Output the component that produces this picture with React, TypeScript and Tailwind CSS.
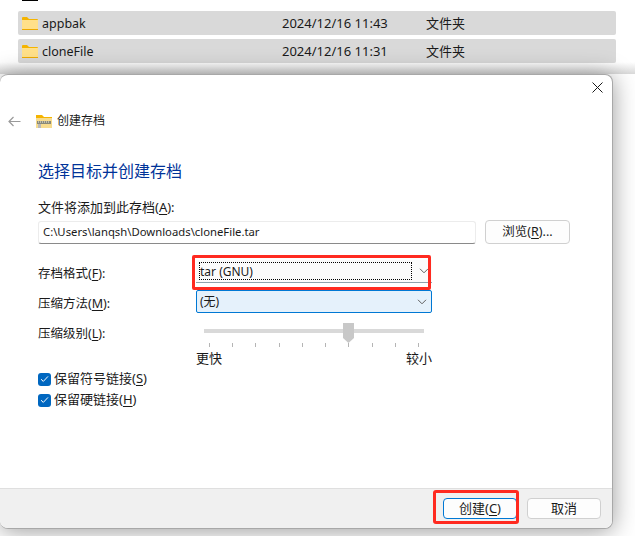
const FONT = "font-['Noto_Sans','Noto_Sans_CJK_SC',sans-serif]";

const FILES = [
  { name: "appbak", time: "2024/12/16 11:43", type: "文件夹" },
  { name: "cloneFile", time: "2024/12/16 11:31", type: "文件夹" },
];

const TICKS = [0, 1, 2, 3, 4, 5, 6, 7, 8, 9];

function Folder() {
  return (
    <svg width="16" height="14" viewBox="0 0 16 14" className="mb-[2px] shrink-0">
      <path d="M0 2a1 1 0 0 1 1-1h4l2 2h8a1 1 0 0 1 1 1v9a1 1 0 0 1-1 1H1a1 1 0 0 1-1-1z" fill="#f5b400" />
      <rect x="0" y="4" width="16" height="9" fill="#ffe08a" />
      <rect x="0" y="13" width="16" height="1" fill="#eda900" />
    </svg>
  );
}

function ZipFolder() {
  return (
    <svg width="16" height="14" viewBox="0 0 16 14" className="shrink-0">
      <path d="M0 1h6l2 2h8v2H0z" fill="#f5b400" />
      <rect x="0" y="4" width="16" height="10" fill="#f7dc8e" />
      <rect x="1" y="7" width="14" height="3" fill="#8a8a78" />
      <path d="M2 8h1M4 8h1M6 8h1M8 8h1M10 8h1M12 8h1" stroke="#f4f1e4" strokeWidth="1" />
      <rect x="2" y="10" width="3" height="4" fill="#b9b9b9" />
    </svg>
  );
}

function Chevron() {
  return (
    <svg width="10" height="6" viewBox="0 0 10 6" className="shrink-0">
      <path d="M1 .8 5 4.8 9 .8" fill="none" stroke="#5f5f5f" strokeWidth="1" />
    </svg>
  );
}

function Check() {
  return (
    <span className="flex h-[13px] w-[13px] shrink-0 items-center justify-center rounded-[3px] bg-[#0067c0]">
      <svg width="9" height="8" viewBox="0 0 9 8">
        <path d="M1 4.2 3.3 6.4 8 1.4" fill="none" stroke="#fff" strokeWidth="1" />
      </svg>
    </span>
  );
}

function Key({ k }: { k: string }) {
  return <span className="underline underline-offset-2">{k}</span>;
}

export default function App() {
  return (
    <div className={`${FONT} h-[536px] w-[635px] overflow-hidden bg-white text-[13px] text-[#1a1a1a]`}>
      <div className="h-[74px] bg-gradient-to-b from-white from-[84%] to-[#d9d9d9]">
        <div className="ml-[22px] h-px w-[16px] bg-black" />
        <div className="ml-[18px] mt-[10px] flex w-[598px] flex-col gap-[4px]">
          {FILES.map((f) => (
            <div key={f.name} className="flex h-[24px] items-center rounded-[2px] bg-[#d9d9d9] pl-[4px] pt-[2px]">
              <Folder />
              <span className="ml-[4px] w-[240px] text-[12.5px]">{f.name}</span>
              <span className="w-[144px]">{f.time}</span>
              <span>{f.type}</span>
            </div>
          ))}
        </div>
      </div>

      <div className="relative flex h-[455px] w-[613px] flex-col rounded-[8px] border border-l-0 border-[#a8a8a8] bg-white shadow-[0_2px_24px_rgba(0,0,0,0.4)]">
        <div className="flex h-[25px] justify-end pr-[9px] pt-[7px]">
          <svg width="11" height="11" viewBox="0 0 11 11">
            <path d="M.5.5l10 10M10.5.5l-10 10" stroke="#1a1a1a" strokeWidth="1" />
          </svg>
        </div>

        <div className="mt-[11px] flex h-[20px] items-center pl-[8px]">
          <svg width="13" height="11" viewBox="0 0 13 11">
            <path d="M12.5 5.5H1M5.5 1 1 5.5 5.5 10" fill="none" stroke="#9a9a9a" strokeWidth="1.2" />
          </svg>
          <span className="ml-[15px]"><ZipFolder /></span>
          <span className="ml-[5px] text-[12px]">创建存档</span>
        </div>

        <div className="flex flex-1 flex-col pl-[38px]">
          <div className="mt-[28px] text-[16px] leading-[24px] text-[#003399]">选择目标并创建存档</div>

          <div className="mt-[15px] leading-[18px]">文件将添加到此存档(<Key k="A" />):</div>

          <div className="mt-[4px] flex items-center">
            <div className="flex h-[23px] w-[438px] items-center rounded-[3px] border border-[#ececec] border-b-[#8a8a8a] pl-[4px] text-[11.3px]">
              C:\Users\lanqsh\Downloads\cloneFile.tar
            </div>
            <div className="ml-[9px] flex h-[24px] w-[85px] items-center justify-center rounded-[4px] border border-[#d0d0d0] bg-[#fdfdfd] text-[12.5px]">
              <span>浏览(<Key k="R" />)...</span>
            </div>
          </div>

          <div className="mt-[11px] flex">
            <div className="flex w-[158px] flex-col text-[12.5px]">
              <div className="flex h-[30px] items-center pt-[8px]"><span>存档格式(<Key k="F" />):</span></div>
              <div className="flex h-[29px] items-center pt-[9px]"><span>压缩方法(<Key k="M" />):</span></div>
              <div className="flex h-[30px] items-center pt-[11px]"><span>压缩级别(<Key k="L" />):</span></div>
            </div>

            <div className="relative w-[236px]">
              <div className="mt-[5px] flex h-[23px] items-center justify-between border-b border-[#8fa3ad] bg-[#fbfbfb] pl-[3px] pr-[3px]">
                <span className="flex h-[18px] w-[213px] items-center border border-dotted border-black pt-[1px] text-[12px]">tar (GNU)</span>
                <Chevron />
              </div>
              <div className="mt-[7px] flex h-[23px] items-center justify-between rounded-[2px] border border-[#0078d4] bg-[#e5f1fb] pl-[3px] pr-[4px] text-[12px]">
                <span className="pt-[1px]">(无)</span>
                <Chevron />
              </div>

              <div className="relative ml-[8px] mt-[16px] w-[220px]">
                <div className="h-[4px] bg-[#d9d9d9]" />
                <svg width="11" height="20" viewBox="0 0 11 20" className="absolute left-[139px] top-[-6px]">
                  <path d="M0 0h11v15l-5.5 5L0 15z" fill="#c8c8c8" />
                </svg>
                <div className="mt-[10px] flex justify-between px-[5px]">
                  {TICKS.map((t) => (
                    <span key={t} className="h-[4px] w-px bg-[#b5b5b5]" />
                  ))}
                </div>
              </div>

              <div className="mt-[2px] flex justify-between leading-[18px]">
                <span>更快</span>
                <span>较小</span>
              </div>

              {/* red annotation */}
              <div className="absolute left-[-4px] top-[0px] h-[35px] w-[239px] rounded-[2px] border-[3px] border-[#ff2a20]" />
            </div>
          </div>

          <div className="mt-[3px] flex flex-col gap-[3px]">
            <div className="flex h-[18px] items-center gap-[3px]"><Check /><span>保留符号链接(<Key k="S" />)</span></div>
            <div className="flex h-[18px] items-center gap-[3px]"><Check /><span>保留硬链接(<Key k="H" />)</span></div>
          </div>
        </div>

        <div className="relative flex h-[40px] justify-end gap-[10px] rounded-b-[8px] border-t border-[#dfdfdf] bg-[#f0f0f0] pr-[11px] pt-[9px]">
          <div className="flex h-[21px] w-[74px] items-center justify-center rounded-[4px] border border-[#0078d4] bg-[#fdfdfd]">
            <span>创建(<Key k="C" />)</span>
          </div>
          <div className="flex h-[21px] w-[74px] items-center justify-center rounded-[4px] border border-[#d0d0d0] bg-[#fdfdfd]">
            取消
          </div>
          <div className="absolute left-[433px] top-[1px] h-[34px] w-[86px] rounded-[3px] border-[3px] border-[#ff2a20]" />
        </div>
      </div>
    </div>
  );
}
